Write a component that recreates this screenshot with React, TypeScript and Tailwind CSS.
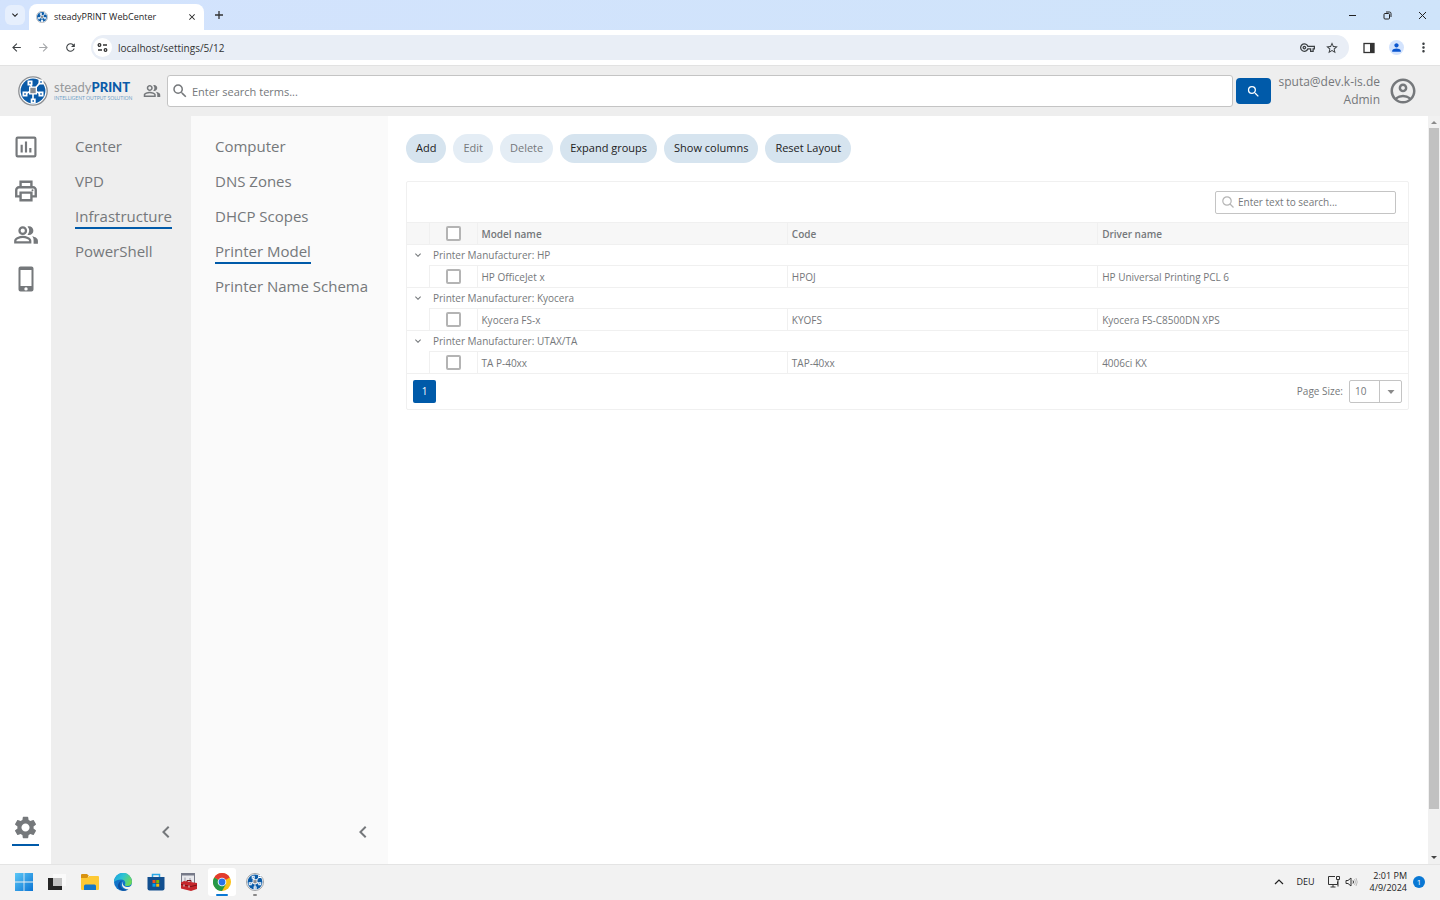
import React, { useState } from 'react';
import {
    MdArrowBack,
    MdArrowForward,
    MdChevronLeft,
    MdClose,
    MdExpandMore,
    MdMoreVert,
    MdOutlineAccountCircle,
    MdOutlinePeopleAlt,
    MdOutlineStarBorder,
    MdOutlineVpnKey,
    MdPerson,
    MdRefresh,
    MdSearch,
    MdSettings,
} from 'react-icons/md';

const CENTER_LINKS = ['Center', 'VPD', 'Infrastructure', 'PowerShell'];
const INFRA_LINKS = ['Computer', 'DNS Zones', 'DHCP Scopes', 'Printer Model', 'Printer Name Schema'];

const GROUPS = [
    { manufacturer: 'HP', rows: [{ model: 'HP OfficeJet x', code: 'HPOJ', driver: 'HP Universal Printing PCL 6' }] },
    { manufacturer: 'Kyocera', rows: [{ model: 'Kyocera FS-x', code: 'KYOFS', driver: 'Kyocera FS-C8500DN XPS' }] },
    { manufacturer: 'UTAX/TA', rows: [{ model: 'TA P-40xx', code: 'TAP-40xx', driver: '4006ci KX' }] },
];

const ACTIONS = [
    { label: 'Add' },
    { label: 'Edit', disabled: true },
    { label: 'Delete', disabled: true },
    { label: 'Expand groups' },
    { label: 'Show columns' },
    { label: 'Reset Layout' },
];

const LogoMark = ({ className }: { className: string }) => (
    <svg viewBox="0 0 30 30" className={className} aria-hidden="true">
        <circle cx="15" cy="15" r="14.2" fill="#fff" stroke="#8b8e92" strokeWidth="1.3" />
        <circle cx="15" cy="15" r="12.4" fill="#0a5ba8" />
        <path d="M15 15L12 7M15 15l7.500-9M15 14L7 18M15 14l8 4M15 15v11" stroke="#fff" strokeWidth="1.6" fill="none" />
        <path d="M9.500 4.500h5v5h-5zM20.500 3.500h5v5h-5zM4.500 15.500h5v5h-5zM20.500 15.500h5v5h-5zM12.700 22.500h5v5h-5z" fill="#fff" />
        <path d="M11.200 6.200h1.600v1.600h-1.600zM22.200 5.200h1.600v1.600h-1.600zM6.200 17.200h1.600v1.600H6.200zM22.200 17.200h1.600v1.600h-1.600zM14.400 24.200H16v1.600h-1.600z" fill="#0a5ba8" />
        <rect x="11" y="10.500" width="8" height="8" fill="#fff" />
        <rect x="12.300" y="11.800" width="5.400" height="5.400" fill="#8b8e92" />
    </svg>
);

const ReportIcon = () => (
    <svg viewBox="0 0 24 24" className="h-[26px] w-[26px]" fill="none" stroke="currentColor">
        <rect x="3.300" y="3.300" width="17.400" height="17.400" rx="1" strokeWidth="2" />
        <path d="M8 17v-7M12 17V7M16 17v-4" strokeWidth="2" />
    </svg>
);

const PrinterIcon = () => (
    <svg viewBox="0 0 24 24" className="h-[26px] w-[26px]" fill="none" stroke="currentColor" strokeWidth="2.200">
        <path d="M7 8V3.500h10V8" />
        <path d="M7 17H3v-6a2.500 2.500 0 0 1 2.500-2.500h13A2.500 2.500 0 0 1 21 11v6h-4" />
        <path d="M7 13.500h10v7H7z" />
        <circle cx="18" cy="11.300" r="0.900" fill="currentColor" stroke="none" />
    </svg>
);

const PeopleIcon = () => (
    <svg viewBox="0 0 24 24" className="h-[26px] w-[26px]" fill="currentColor">
        <circle cx="9" cy="8" r="3" fill="none" stroke="currentColor" strokeWidth="2.100" />
        <path d="M14.800 12a4 4 0 0 0 0-8c-0.500 0-1 0.100-1.400 0.250a6 6 0 0 1 0 7.500c0.400 0.150 0.900 0.250 1.400 0.250z" />
        <path d="M2.100 18.900v-1.600c0-2.200 4.200-3.500 6.900-3.500s6.900 1.300 6.900 3.500v1.600z" fill="none" stroke="currentColor" strokeWidth="2.100" />
        <path d="M19 20h4v-2.800c0-2-2.500-3.400-5.300-4C18.800 14.300 19 15.500 19 17.200z" />
    </svg>
);

const PhoneIcon = () => (
    <svg viewBox="0 0 16 26" className="h-[26px] w-4" fill="currentColor">
        <path fillRule="evenodd" d="M2.500 0.500h11a2 2 0 0 1 2 2v21a2 2 0 0 1-2 2h-11a2 2 0 0 1-2-2v-21a2 2 0 0 1 2-2zM2.500 4v16h11V4zM8 21.200a1.700 1.700 0 1 0 0 3.400 1.700 1.700 0 0 0 0-3.400z" />
    </svg>
);

const BrowserChrome = () => (
    <header className="shrink-0">
        <div className="flex h-[30px] items-center bg-linear-to-r from-[#d3e3fd] to-[#cfe4fa]">
            <button aria-label="Search tabs" className="ml-[5px] flex h-5 w-5 items-center justify-center rounded-md bg-[#e6effd] text-[#1f1f1f]">
                <MdExpandMore size={12} />
            </button>
            <div className="ml-1 flex h-[26px] w-[175px] items-center self-end rounded-t-lg bg-white px-[7px] text-[#1f1f1f]">
                <LogoMark className="h-3 w-3 shrink-0" />
                <span className="ml-1.5 flex-1 text-[9px] whitespace-nowrap">steadyPRINT WebCenter</span>
                <button aria-label="Close tab"><MdClose size={10} /></button>
            </div>
            <button aria-label="New tab" className="ml-2.5">
                <svg viewBox="0 0 10 10" className="h-2.5 w-2.5" stroke="#333" strokeWidth="1.300"><path d="M5 1v8M1 5h8" /></svg>
            </button>
            <div className="ml-auto flex items-center gap-[26px] pr-[13px]">
                <button aria-label="Minimize">
                    <svg viewBox="0 0 9 9" className="h-[9px] w-[9px]" stroke="#222"><path d="M1 4.500h7" /></svg>
                </button>
                <button aria-label="Restore">
                    <svg viewBox="0 0 9 9" className="h-[9px] w-[9px]" stroke="#222" fill="none">
                        <rect x="1" y="2.500" width="5.500" height="5.500" rx="1" />
                        <path d="M3 1h3.500a1.500 1.500 0 0 1 1.500 1.500V6" />
                    </svg>
                </button>
                <button aria-label="Close">
                    <svg viewBox="0 0 9 9" className="h-[9px] w-[9px]" stroke="#222"><path d="M1 1l7 7M8 1l-7 7" /></svg>
                </button>
            </div>
        </div>
        <div className="flex h-[35px] items-center bg-white px-2.5 text-[#3c4043]">
            <button aria-label="Back"><MdArrowBack size={13} /></button>
            <button aria-label="Forward" className="ml-3.5 text-[#a5a7aa]"><MdArrowForward size={13} /></button>
            <button aria-label="Reload" className="ml-3.5"><MdRefresh size={13} /></button>
            <div className="ml-3.5 flex h-[25px] flex-1 items-center rounded-full bg-[#e9eef6] pr-2.5 pl-0.5">
                <button aria-label="Site information" className="flex h-[19px] w-[19px] items-center justify-center rounded-full bg-white">
                    <svg viewBox="0 0 11 11" className="h-[11px] w-[11px]" fill="none" stroke="#333" strokeWidth="1.300">
                        <circle cx="2.500" cy="3" r="1.300" /><path d="M6 3h4M1 8h4" /><circle cx="8.500" cy="8" r="1.300" />
                    </svg>
                </button>
                <input aria-label="Address" defaultValue="localhost/settings/5/12" className="ml-1.5 h-5 flex-1 bg-transparent text-[10px] text-[#333] outline-none" />
                <button aria-label="Passwords"><MdOutlineVpnKey size={15} /></button>
                <button aria-label="Bookmark" className="ml-2.5"><MdOutlineStarBorder size={14} /></button>
            </div>
            <button aria-label="Side panel" className="ml-3.5">
                <svg viewBox="0 0 12 12" className="h-3 w-3">
                    <rect x="1" y="1.500" width="10" height="9" fill="none" stroke="#333" strokeWidth="1.300" />
                    <path d="M7 1.500h4v9H7z" fill="#333" />
                </svg>
            </button>
            <button aria-label="Profile" className="ml-3.5 flex h-[15px] w-[15px] items-center justify-center rounded-full bg-[#d3e3fd] text-[#0b57d0]">
                <MdPerson size={13} />
            </button>
            <button aria-label="Menu" className="-mr-px ml-3"><MdMoreVert size={15} /></button>
        </div>
    </header>
);

const AppHeader = () => (
    <div className="flex h-[51px] shrink-0 items-center border-t border-[#e2e2e2] bg-[#eeeeee] pr-[22px] pl-[18px]">
        <LogoMark className="h-[30px] w-[30px]" />
        <div className="ml-1.5 flex w-[77px] flex-col font-['Lato','Open_Sans',sans-serif]">
            <span className="text-[13px] leading-[15px] whitespace-nowrap text-[#96999c]">
                steady<b className="font-black text-[#0a5ba8]">PRINT</b>
            </span>
            <span className="text-[5px] leading-[7px] whitespace-nowrap text-[#6f9fc8]">INTELLIGENT OUTPUT SOLUTION</span>
        </div>
        <MdOutlinePeopleAlt size={18} className="ml-3 text-[#75787b]" />
        <div className="ml-1.5 flex h-8 flex-1 items-center rounded-[3px] border border-[#c4c4c4] bg-white pl-[3px]">
            <MdSearch size={18} className="text-[#75787b]" />
            <input
                aria-label="Search"
                placeholder="Enter search terms..."
                className="ml-[3px] h-7 flex-1 bg-transparent text-[11px] outline-none placeholder:text-[#75787b]"
            />
        </div>
        <button aria-label="Start search" className="ml-[3px] flex h-[26px] w-[35px] items-center justify-center rounded-[4px] bg-[#005aa9] text-white">
            <MdSearch size={15} />
        </button>
        <div className="ml-2 text-right text-[12px] leading-[18px] text-[#75787b]">
            <div>sputa@dev.k-is.de</div>
            <div>Admin</div>
        </div>
        <MdOutlineAccountCircle size={30} className="ml-2 text-[#75787b]" />
    </div>
);

const SubNav = ({ links, active, className }: { links: string[]; active: string; className: string }) => (
    <nav className={`flex shrink-0 flex-col pl-6 pt-5 ${className}`}>
        <ul>
            {links.map(link => (
                <li key={link} className="flex h-[35px] items-start">
                    <a
                        href="#"
                        className={`border-b-2 text-[15px] leading-[21px] whitespace-nowrap text-[#75787b] ${
                            link === active ? 'border-[#005aa9]' : 'border-transparent'
                        }`}
                    >
                        {link}
                    </a>
                </li>
            ))}
        </ul>
        <button aria-label="Collapse" className="mt-auto mr-[13px] mb-5 self-end text-[#75787b]">
            <MdChevronLeft size={24} />
        </button>
    </nav>
);

const Check = ({ label }: { label: string }) => (
    <input
        type="checkbox"
        aria-label={label}
        className="mx-auto block h-[15px] w-[15px] appearance-none rounded-[2px] border-2 border-[#b4b4b4] bg-white checked:bg-[#005aa9]"
    />
);

const PrinterModelGrid = () => {
    const [pageSize, setPageSize] = useState('10');

    return (
        <section className="mt-[18px] rounded-[2px] border border-[#f0f0f0] text-[10px] text-[#75787b]">
            <div className="flex h-10 items-center justify-end pr-3">
                <div className="flex h-[23px] w-[181px] items-center rounded-[2px] border border-[#c4c4c4] pl-1.5">
                    <svg viewBox="0 0 12 12" className="h-3 w-3" fill="none" stroke="#b5b5b5" strokeWidth="1.200">
                        <circle cx="5" cy="5" r="4.200" /><path d="M8 8l3.500 3.500" />
                    </svg>
                    <input
                        aria-label="Search in table"
                        placeholder="Enter text to search..."
                        className="ml-1 h-5 min-w-0 flex-1 outline-none placeholder:text-[#75787b]"
                    />
                </div>
            </div>

            <table className="w-full table-fixed border-collapse text-left leading-4">
                <colgroup>
                    <col className="w-[22px]" />
                    <col className="w-12" />
                    <col />
                    <col />
                    <col />
                </colgroup>
                <thead>
                    <tr className="h-[22px] border-y border-[#f0f0f0] bg-[#f7f7f7]">
                        <th className="border-r border-[#f0f0f0]" />
                        <th className="border-r border-[#f0f0f0]"><Check label="Select all" /></th>
                        <th className="border-r border-[#f0f0f0] pl-1 font-semibold">Model name</th>
                        <th className="border-r border-[#f0f0f0] pl-1 font-semibold">Code</th>
                        <th className="pl-1 font-semibold">Driver name</th>
                    </tr>
                </thead>
                <tbody>
                    {GROUPS.map(group => (
                        <React.Fragment key={group.manufacturer}>
                            <tr className="h-[21px]">
                                <td>
                                    <button aria-label="Collapse group" className="mx-auto block"><MdExpandMore size={12} /></button>
                                </td>
                                <td colSpan={4} className="border-b border-[#f0f0f0] pl-1">
                                    Printer Manufacturer: {group.manufacturer}
                                </td>
                            </tr>
                            {group.rows.map(row => (
                                <tr key={row.code} className="h-[22px] border-b border-[#f0f0f0]">
                                    <td className="border-r border-[#f0f0f0]" />
                                    <td className="border-r border-[#f0f0f0]"><Check label={row.model} /></td>
                                    <td className="border-r border-[#f0f0f0] pl-1">{row.model}</td>
                                    <td className="border-r border-[#f0f0f0] pl-1">{row.code}</td>
                                    <td className="pl-1">{row.driver}</td>
                                </tr>
                            ))}
                        </React.Fragment>
                    ))}
                </tbody>
            </table>

            {/* Pager */}
            <div className="flex h-[35px] items-center px-1.5">
                <button className="h-[23px] w-[23px] rounded-[2px] bg-[#005aa9] text-white">1</button>
                <label htmlFor="page-size" className="ml-auto">Page Size:</label>
                <div className="relative ml-1.5 h-[23px] w-[53px]">
                    <select
                        id="page-size"
                        value={pageSize}
                        onChange={e => setPageSize(e.target.value)}
                        className="h-full w-full appearance-none rounded-[2px] border border-[#c4c4c4] bg-white pl-[5px] outline-none"
                    >
                        {['10', '20', '50'].map(size => (
                            <option key={size}>{size}</option>
                        ))}
                    </select>
                    <span className="pointer-events-none absolute inset-y-0 right-0 flex w-[23px] items-center justify-center border-l border-[#c4c4c4]">
                        <svg viewBox="0 0 8 4" className="h-1 w-2" fill="#8a8a8a"><path d="M0.500 0h7L4 4z" /></svg>
                    </span>
                </div>
            </div>
        </section>
    );
};

const Scrollbar = () => (
    <div className="flex w-3 shrink-0 flex-col items-center bg-[#f1f1f1]">
        <svg viewBox="0 0 12 12" className="h-3 w-3" fill="#8a8a8a"><path d="M3 8h6L6 5z" /></svg>
        <div className="w-2.5 flex-[94] bg-[#c1c1c1]" />
        <div className="flex-[6]" />
        <svg viewBox="0 0 12 12" className="h-3 w-3" fill="#444"><path d="M3 4h6L6 7z" /></svg>
    </div>
);

const Taskbar = () => (
    <footer className="flex h-9 shrink-0 items-center border-t border-[#e4e4e4] bg-[#f2f2f2] pr-[15px] pb-0.5 pl-2.5 text-[#222]">
        <div className="flex items-center gap-[5px]">
            <button aria-label="Start" className="flex h-7 w-7 items-center justify-center">
                <svg viewBox="0 0 18 18" className="h-[18px] w-[18px]">
                    <defs>
                        <linearGradient id="win" x1="0" y1="0" x2="1" y2="1">
                            <stop offset="0" stopColor="#5cc8f7" /><stop offset="1" stopColor="#0a74d4" />
                        </linearGradient>
                    </defs>
                    <path d="M0 0h8.600v8.600H0zM9.400 0H18v8.600H9.400zM0 9.400h8.600V18H0zM9.400 9.400H18V18H9.400z" fill="url(#win)" />
                </svg>
            </button>
            <button aria-label="Task view" className="flex h-7 w-7 items-center justify-center">
                <svg viewBox="0 0 18 18" className="h-[18px] w-[18px]">
                    <path d="M5 1h13v12H5z" fill="#fafafa" />
                    <path d="M0 5h14v12H0z" fill="#252525" />
                    <path d="M5 5h9v8H5z" fill="#c2c2c2" />
                </svg>
            </button>
            <button aria-label="File Explorer" className="flex h-7 w-7 items-center justify-center">
                <svg viewBox="0 0 18 18" className="h-[18px] w-[18px]">
                    <path d="M0 2a1 1 0 0 1 1-1h5l2 2h-1v4H0z" fill="#d8920f" />
                    <path d="M0 5h6l2-2h9a1 1 0 0 1 1 1v12a1 1 0 0 1-1 1H1a1 1 0 0 1-1-1z" fill="#fdc934" />
                    <path d="M3 17v-4a1.500 1.500 0 0 1 1.500-1.500h9A1.500 1.500 0 0 1 15 13v4z" fill="#1477c9" />
                </svg>
            </button>
            <button aria-label="Edge" className="flex h-7 w-7 items-center justify-center">
                <svg viewBox="0 0 18 18" className="h-[18px] w-[18px]">
                    <defs>
                        <linearGradient id="edge-top" x1="0" y1="0" x2="1" y2="0.500">
                            <stop offset="0" stopColor="#1b9de2" /><stop offset="0.500" stopColor="#2cc3d3" /><stop offset="1" stopColor="#6bd85b" />
                        </linearGradient>
                    </defs>
                    <circle cx="9" cy="9" r="9" fill="#1173c8" />
                    <path d="M0 9a9 9 0 0 1 18-0.500c0 3-2.200 4.500-4.500 4.500-2 0-3-0.800-2.500-1.800 1-2-0.500-4.700-4-4.700C4 6.500 1.500 7.500 0 9z" fill="url(#edge-top)" />
                    <path d="M6.500 9.500C5 14 9.500 18 14.500 16.200 12 18.500 5.500 18.500 4 14c-0.500-3 1.500-6 4.500-6.500-1 0.500-1.700 1.200-2 2z" fill="#0d4f9f" />
                    <path d="M9.500 8.500c-2 1.500-0.500 5 3.500 5.500 2 0 3.500-0.500 4.500-1.500L18 15l-2 1c-3.500 1-8-1-8-4.500 0-1.500 0.500-2.500 1.500-3z" fill="#f2f2f2" />
                </svg>
            </button>
            <button aria-label="Store" className="flex h-7 w-7 items-center justify-center">
                <svg viewBox="0 0 18 18" className="h-[18px] w-[18px]">
                    <path d="M5.500 5V1.500h7V5" fill="none" stroke="#29a9e8" strokeWidth="1.500" />
                    <path d="M0.500 4h17v11.500a2 2 0 0 1-2 2h-13a2 2 0 0 1-2-2z" fill="#124f8f" />
                    <path d="M5.500 7h3v3h-3z" fill="#f25022" /><path d="M9.200 7h3v3h-3z" fill="#7fba00" />
                    <path d="M5.500 10.700h3v3h-3z" fill="#00a4ef" /><path d="M9.200 10.700h3v3h-3z" fill="#ffb900" />
                </svg>
            </button>
            <button aria-label="Server tools" className="flex h-7 w-7 items-center justify-center">
                <svg viewBox="0 0 18 18" className="h-[18px] w-[18px]">
                    <path d="M1.500 0.500h13v11h-13z" fill="#e8e8ec" stroke="#777a88" />
                    <path d="M1 0h14v2.500H1z" fill="#777a88" />
                    <path d="M5 8V4.500M10 9V5" stroke="#9a9aa5" />
                    <path d="M1 9.500L4 8l13 2v6l-6 2-10-2.500z" fill="#c6262b" />
                    <path d="M1 11.500l10 2 6-1.500M7 9V7.500h4V9" stroke="#7d1015" fill="none" />
                    <path d="M4 11.500v2M9 12.500v2" stroke="#eee" />
                </svg>
            </button>
            <button aria-label="Chrome" className="flex h-7 w-7 flex-col items-center justify-between rounded-[3px] bg-white pt-[5px]">
                <svg viewBox="0 0 18 18" className="h-[18px] w-[18px]">
                    <circle cx="9" cy="9" r="9" fill="#fbc116" />
                    <path d="M9 9L1.200 4.500A9 9 0 0 1 16.800 4.500z" fill="#e33b2e" />
                    <path d="M1.200 4.500A9 9 0 0 0 9 18l3.900-6.800L9 9z" fill="#269847" />
                    <circle cx="9" cy="9" r="4.300" fill="#fff" />
                    <circle cx="9" cy="9" r="3.400" fill="#2b74e8" />
                </svg>
                <span className="h-0.5 w-3 rounded-full bg-[#0a78d4]" />
            </button>
            <button aria-label="steadyPRINT" className="flex h-7 w-7 flex-col items-center justify-between pt-[5px]">
                <LogoMark className="h-[18px] w-[18px]" />
                <span className="h-0.5 w-1 rounded-full bg-[#888]" />
            </button>
        </div>
        <div className="ml-auto flex items-center text-[9px]">
            <svg viewBox="0 0 10 6" className="h-1.5 w-2.5" fill="none" stroke="#222" strokeWidth="1.200"><path d="M1 5l4-4 4 4" /></svg>
            <span className="ml-3">DEU</span>
            <svg viewBox="0 0 14 13" className="ml-3 h-[13px] w-3.5" fill="none" stroke="#333">
                <path d="M8 1.500H1.500v8h9V6.500M3.500 12h5M6 9.500V12" />
                <path d="M9.500 1.500h3v3h-3zM11 4.500v7" />
            </svg>
            <svg viewBox="0 0 13 10" className="ml-1 h-2.5 w-[13px]" fill="none" stroke="#333">
                <path d="M1 3.500h2L6 1v8L3 6.500H1z" />
                <path d="M8 3.500q1 1.500 0 3" /><path d="M9.500 2q2 3 0 6M11 1q2.500 4 0 8" stroke="#bbb" />
            </svg>
            <div className="ml-3 text-right leading-3">
                <div>2:01 PM</div>
                <div>4/9/2024</div>
            </div>
            <span className="ml-1.5 flex h-3 w-3 items-center justify-center rounded-full bg-[#0a78d4] text-[8px] text-white">1</span>
        </div>
    </footer>
);

export default function App() {
    return (
        <div className="flex h-screen flex-col overflow-hidden bg-white font-['Open_Sans','Noto_Sans',sans-serif]">
            <BrowserChrome />
            <AppHeader />
            <div className="flex min-h-0 flex-1">
                {/* Icon rail */}
                <nav className="flex w-[51px] shrink-0 flex-col items-center pt-[18px] pb-[18px] text-[#75787b]">
                    <div className="flex flex-col items-center gap-[18px]">
                        <a href="#" aria-label="Reports"><ReportIcon /></a>
                        <a href="#" aria-label="Printers"><PrinterIcon /></a>
                        <a href="#" aria-label="Users"><PeopleIcon /></a>
                        <a href="#" aria-label="Devices"><PhoneIcon /></a>
                    </div>
                    <a href="#" aria-label="Settings" className="mt-auto border-b-2 border-[#005aa9] pb-[3px]">
                        <MdSettings size={27} />
                    </a>
                </nav>
                <SubNav links={CENTER_LINKS} active="Infrastructure" className="w-[140px] bg-[#eeeeee]" />
                <SubNav links={INFRA_LINKS} active="Printer Model" className="w-[197px] bg-[#fafafa]" />

                <main className="min-w-0 flex-1 pt-[18px] pr-[19px] pl-[18px]">
                    <div className="flex gap-[7px]">
                        {ACTIONS.map(action => (
                            <button
                                key={action.label}
                                disabled={action.disabled}
                                className="h-[29px] rounded-full bg-[#d6e4ef] px-2.5 text-[11px] text-[#222] disabled:bg-[#e4edf5] disabled:text-[#75787b]"
                            >
                                {action.label}
                            </button>
                        ))}
                    </div>
                    <PrinterModelGrid />
                </main>
                <Scrollbar />
            </div>
            <Taskbar />
        </div>
    );
}
